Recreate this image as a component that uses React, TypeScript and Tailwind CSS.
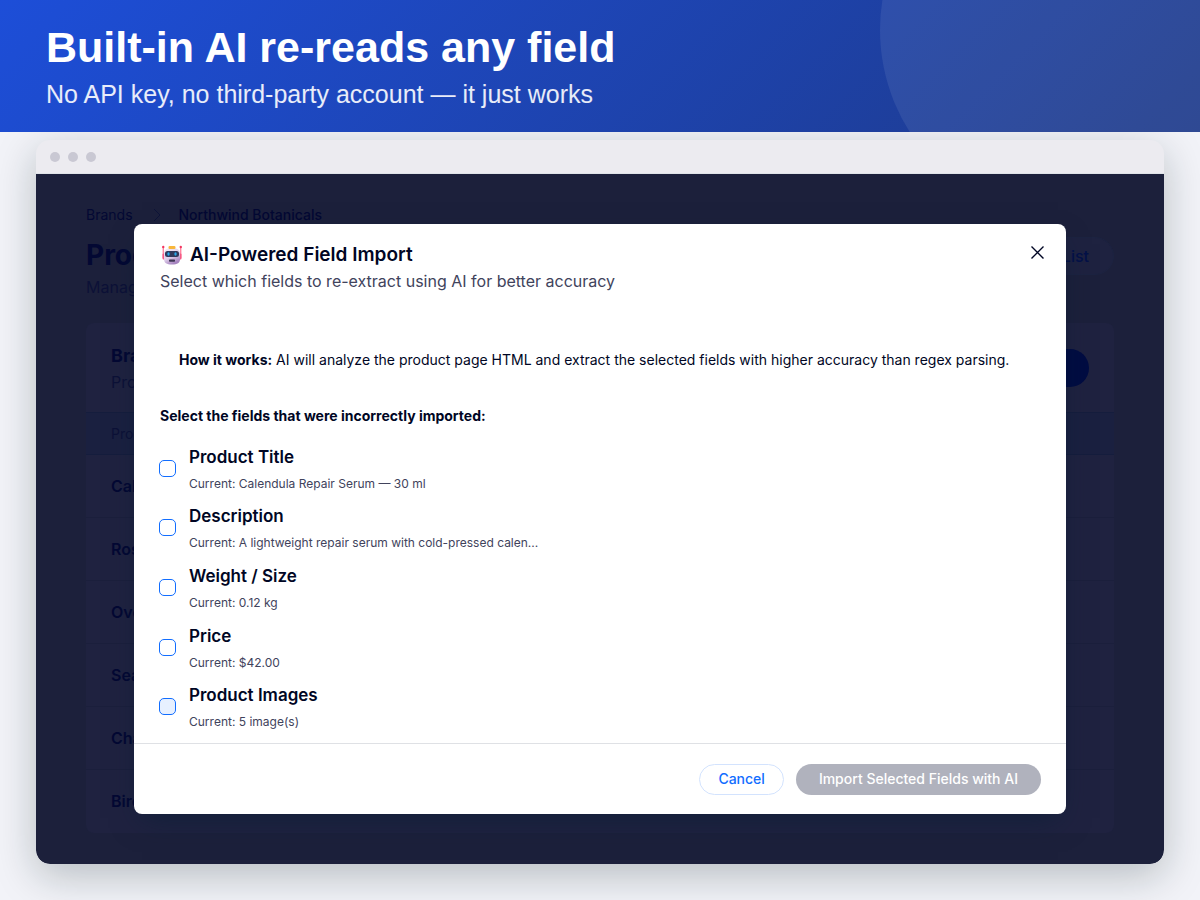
interface Field {
  id: string;
  label: string;
  current: string;
  hovered?: boolean;
}

const fields: Field[] = [
  { id: "title", label: "Product Title", current: "Calendula Repair Serum — 30 ml" },
  { id: "description", label: "Description", current: "A lightweight repair serum with cold-pressed calen..." },
  { id: "weight", label: "Weight / Size", current: "0.12 kg" },
  { id: "price", label: "Price", current: "$42.00" },
  { id: "images", label: "Product Images", current: "5 image(s)", hovered: true },
];

const products = ["Cal", "Ros", "Ove", "Sea", "Cha", "Birc"];

function RobotIcon() {
  return (
    <svg viewBox="0 0 40 40" className="h-5 w-5 shrink-0" aria-hidden="true">
      <defs>
        <linearGradient id="robot-face" x1="0" y1="0" x2="0.5" y2="1">
          <stop offset="0" stopColor="#f6eef8" />
          <stop offset="0.6" stopColor="#e0cfea" />
          <stop offset="1" stopColor="#a583bf" />
        </linearGradient>
      </defs>
      <path d="M2.5 4v22M37.5 4v22" stroke="#ff7391" strokeWidth="2.4" />
      <circle cx="2.5" cy="4" r="2.4" fill="#f3355f" />
      <circle cx="37.5" cy="4" r="2.4" fill="#f3355f" />
      <rect x="1" y="17" width="5" height="12" rx="2" fill="#f55a86" />
      <rect x="34" y="17" width="5" height="12" rx="2" fill="#f55a86" />
      <path d="M4 17C4 9 10 6 20 6s16 3 16 11v11c0 8-5 11-16 11S4 36 4 28z" fill="url(#robot-face)" />
      <rect x="13" y="2" width="14" height="6" rx="2.5" fill="#f8b73c" />
      <rect x="6" y="12" width="28" height="12" rx="5" fill="#303a5c" />
      <ellipse cx="13" cy="18" rx="2.4" ry="3.4" fill="#28a8ec" />
      <ellipse cx="27" cy="18" rx="2.4" ry="3.4" fill="#28a8ec" />
      <rect x="14" y="29" width="12" height="4.5" rx="1.5" fill="#3e3654" />
    </svg>
  );
}

// Page behind the dialog, already dimmed
function ProductsPage() {
  return (
    <div className="px-[50px] pt-[31px] pb-[31px] text-[#030833]" inert>
      <nav className="flex h-5 items-center text-sm">
        <a href="#brands">Brands</a>
        <svg viewBox="0 0 8 14" className="mr-[18px] ml-5 h-3.5 w-2" fill="none" stroke="#0e1438">
          <path d="M1 1l6 6-6 6" />
        </svg>
        <a href="#northwind" className="font-medium">
          Northwind Botanicals
        </a>
      </nav>

      <div className="mt-3 flex items-start justify-between">
        <div>
          <div className="text-[28px] leading-9 font-bold">Prod</div>
          <div className="mt-0.5 text-base leading-6 text-[#0c1137]">Manage</div>
        </div>
        <button
          type="button"
          className="rounded-full border border-[#1c2341] bg-[#1e2240] px-6 py-1.5 text-base leading-6 font-medium text-[#031148]"
        >
          Back to List
        </button>
      </div>

      <div className="mt-6 overflow-hidden rounded-lg bg-[#1f2240]">
        <div className="flex h-[89px] items-center justify-between px-[25px]">
          <div>
            <div className="text-lg leading-7 font-bold">Bran</div>
            <div className="text-base leading-6 text-[#0c1137]">Prod</div>
          </div>
          <button type="button" aria-label="Add" className="h-[38px] w-40 rounded-full bg-[#000c42]" />
        </div>
        <table className="w-full border-collapse text-left">
          <thead>
            <tr className="h-[42px] border-y border-[#151d3d] bg-[#1a2040] text-sm text-[#0c1137]">
              <th className="px-[25px] font-normal">Prod</th>
            </tr>
          </thead>
          <tbody>
            {products.map((name) => (
              <tr key={name} className="h-[63px] border-b border-[#1b1f3c] text-base last:border-b-0">
                <td className="px-[25px] font-semibold">{name}</td>
              </tr>
            ))}
          </tbody>
        </table>
      </div>
    </div>
  );
}

function FieldRow({ field }: { field: Field }) {
  return (
    <li className="flex h-15 items-start gap-[13px]">
      <input
        type="checkbox"
        id={field.id}
        className={`mt-[15px] h-[17px] w-[17px] appearance-none rounded-[5px] border border-[#116dff] ${
          field.hovered ? "bg-[#e7f0ff]" : "bg-white"
        }`}
      />
      <label htmlFor={field.id}>
        <span className="block text-[17px] leading-6 font-semibold">{field.label}</span>
        <span className="mt-[5px] block text-xs leading-5 text-[#41435c]">Current: {field.current}</span>
      </label>
    </li>
  );
}

function ImportDialog() {
  return (
    <div
      role="dialog"
      aria-labelledby="dialog-title"
      className="w-full max-w-[932px] rounded-lg bg-white text-[#000624] shadow-[0_12px_28px_-8px_rgba(0,30,50,0.5)]"
    >
      <header className="flex items-start justify-between pt-[15px] pr-[15px] pl-[26px]">
        <div className="pt-[3px]">
          <h2 id="dialog-title" className="flex items-center gap-2 pl-0.5 text-[19px] leading-[26px] font-semibold">
            <RobotIcon />
            AI-Powered Field Import
          </h2>
          <p className="text-base leading-[26px] text-[#41435c]">
            Select which fields to re-extract using AI for better accuracy
          </p>
        </div>
        <button type="button" aria-label="Close" className="p-[7px]">
          <svg viewBox="0 0 13 13" className="h-[13px] w-[13px]" fill="none" stroke="#000624" strokeWidth="1.4">
            <path d="M.5.5l12 12M12.5.5l-12 12" />
          </svg>
        </button>
      </header>

      <div className="px-[26px] pt-[54px]">
        <p className="px-[19px] text-sm leading-6">
          <b className="font-bold">How it works:</b> AI will analyze the product page HTML and extract the selected
          fields with higher accuracy than regex parsing.
        </p>
        <p className="mt-8 text-sm leading-6 font-bold">Select the fields that were incorrectly imported:</p>
        <ul className="mt-[17px] -ml-px flex h-[298px] flex-col justify-between">
          {fields.map((field) => (
            <FieldRow key={field.id} field={field} />
          ))}
        </ul>
      </div>

      <footer className="flex justify-end gap-3 border-t border-[#dfe1e5] px-[25px] pt-5 pb-[19px] text-sm font-medium">
        <button type="button" className="h-[31px] rounded-full border border-[#d3e3fe] px-[18px] text-[#116dff]">
          Cancel
        </button>
        <button type="button" disabled className="h-[31px] rounded-full bg-[#b0b2bd] px-[23px] text-white">
          Import Selected Fields with AI
        </button>
      </footer>
    </div>
  );
}

export default function App() {
  return (
    <div className="flex min-h-screen flex-col bg-[#f2f3f8] font-['Inter',sans-serif]">
      <header className="relative z-10 h-[132px] overflow-hidden bg-[linear-gradient(135deg,#1d4ed8_0%,#1e3a8a_100%)] px-[46px] pt-5 font-['Liberation_Sans',Arial,sans-serif] text-white">
        <div className="absolute -top-40 -right-15 h-[380px] w-[380px] rounded-full bg-white/8" />
        <h1 className="text-[43px] leading-[54px] font-bold">Built-in AI re-reads any field</h1>
        <p className="mt-1 text-[25px] leading-8 text-white/90">No API key, no third-party account — it just works</p>
      </header>

      <main className="flex-1 px-9 pt-2 pb-9">
        <div className="overflow-hidden rounded-[14px] bg-[#ecebf0] shadow-[0_12px_40px_rgba(10,30,35,0.25)]">
          <div className="flex h-[34px] items-center gap-2 border-b border-[#dfe3e8] px-3.5">
            <span className="h-2.5 w-2.5 rounded-full bg-[#c9c8d3]" />
            <span className="h-2.5 w-2.5 rounded-full bg-[#c9c8d3]" />
            <span className="h-2.5 w-2.5 rounded-full bg-[#c9c8d3]" />
          </div>
          <div className="relative rounded-b-[14px] bg-[#1c203b]">
            <ProductsPage />
            <div className="absolute inset-0 flex items-center justify-center">
              <ImportDialog />
            </div>
          </div>
        </div>
      </main>
    </div>
  );
}
